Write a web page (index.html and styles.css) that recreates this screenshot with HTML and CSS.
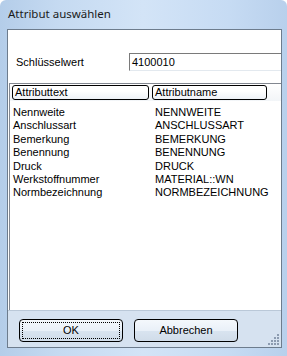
FILE: index.html
```html
<!DOCTYPE html>
<html lang="de">
<head>
    <meta charset="UTF-8">
    <title>Attribut auswählen</title>
    <link rel="stylesheet" href="styles.css">
</head>
<body>
    <div class="window">
        <div class="titlebar">Attribut auswählen</div>
        <div class="client">
            <div class="keypanel">
                <label class="keylabel">Schlüsselwert</label>
                <div class="keyinput">4100010</div>
            </div>
            <div class="list">
                <div class="listhead">
                    <div class="col col1">Attributtext</div>
                    <div class="col col2">Attributname</div>
                </div>
                <div class="rows">
                    <div class="row"><span class="c1">Nennweite</span><span>NENNWEITE</span></div>
                    <div class="row"><span class="c1">Anschlussart</span><span>ANSCHLUSSART</span></div>
                    <div class="row"><span class="c1">Bemerkung</span><span>BEMERKUNG</span></div>
                    <div class="row"><span class="c1">Benennung</span><span>BENENNUNG</span></div>
                    <div class="row"><span class="c1">Druck</span><span>DRUCK</span></div>
                    <div class="row"><span class="c1">Werkstoffnummer</span><span>MATERIAL::WN</span></div>
                    <div class="row"><span class="c1">Normbezeichnung</span><span>NORMBEZEICHNUNG</span></div>
                </div>
            </div>
            <div class="buttons">
                <button class="btn btn-default"><span>OK</span></button>
                <button class="btn"><span>Abbrechen</span></button>
                <div class="grip">
                    <svg width="12" height="12" viewBox="0 0 12 12">
                        <g fill="#8c9bb0">
                            <rect x="9" y="0" width="2" height="2"/>
                            <rect x="6" y="3" width="2" height="2"/><rect x="9" y="3" width="2" height="2"/>
                            <rect x="3" y="6" width="2" height="2"/><rect x="6" y="6" width="2" height="2"/><rect x="9" y="6" width="2" height="2"/>
                            <rect x="0" y="9" width="2" height="2"/><rect x="3" y="9" width="2" height="2"/><rect x="6" y="9" width="2" height="2"/><rect x="9" y="9" width="2" height="2"/>
                        </g>
                    </svg>
                </div>
            </div>
        </div>
    </div>
</body>
</html>
```

FILE: styles.css
```css
*{
    margin: 0;
    padding: 0;
    box-sizing: border-box;
}

body{
    width: 287px;
    height: 356px;
    overflow: hidden;
    font-family: "Liberation Sans", Arial, sans-serif;
    font-size: 11px;
    color: #000;
}

/* fenster mit aero-rahmen */
.window{
    width: 287px;
    height: 356px;
    padding: 0 5px 8px 7px;
    display: flex;
    flex-direction: column;
    background: linear-gradient(90deg, #b4cde9 0%, #c5daf1 20%, #d3e4f7 50%, #c6dbf3 80%, #b8d0ec 100%);
    border-radius: 6px 6px 0 0;
}

.titlebar{
    height: 29px;
    padding: 6px 0 0 1px;
    font-family: "Noto Sans", sans-serif;
    font-size: 11.5px;
    color: #1a1a1a;
}

.client{
    flex: 1;
    display: flex;
    flex-direction: column;
    border: 1px solid #6d7c8d;
    background: #fff;
}

.keypanel{
    height: 53px;
    display: flex;
    align-items: flex-start;
    padding: 23px 0 0 8px;
    background: #fff;
}

.keylabel{
    width: 113px;
    padding-top: 3px;
}

.keyinput{
    flex: 1;
    height: 18px;
    border: 1px solid #7a7a7a;
    border-right: none;
    border-bottom-color: #e3e9ef;
    padding: 2px 0 0 2px;
}

/* liste */
.list{
    flex: 1;
    margin-left: 1px;
    border-top: 1px solid #828790;
    border-left: 1px solid #828790;
    background: #fff;
}

.listhead{
    display: flex;
    height: 17px;
    padding: 1px 0 0 2px;
    background: linear-gradient(#ffffff, #f2f5f8);
}

.col{
    height: 15px;
    border: 1px solid #000;
    border-radius: 3px;
    padding: 0 0 0 2px;
    line-height: 13px;
    background: linear-gradient(#ffffff 40%, #eef2f7);
}

.col1{
    width: 137px;
    margin-right: 3px;
}

.col2{
    width: 115px;
}

.rows{
    padding: 5px 0 0 3px;
}

.row{
    display: flex;
    height: 13.4px;
    line-height: 13px;
}

.c1{
    width: 142px;
}

/* untere leiste */
.buttons{
    height: 37px;
    display: flex;
    align-items: flex-start;
    padding: 8px 0 0 11px;
    background: #d6e2f0;
    border-top: 1px solid #bac8d8;
    position: relative;
}

.btn{
    width: 104px;
    height: 23px;
    margin-right: 11px;
    border: 1px solid #000;
    border-radius: 4px;
    background: linear-gradient(#f4f8fc 0%, #e9f0f8 50%, #d9e4f0 51%, #d0dce9 100%);
    font-family: "Liberation Sans", Arial, sans-serif;
    font-size: 11px;
    color: #000;
    padding: 2px;
}

.btn span{
    display: block;
    height: 100%;
    line-height: 15px;
    border: 1px dotted transparent;
}

.btn-default span{
    border-color: #000;
}

.grip{
    position: absolute;
    right: 1px;
    bottom: 1px;
    height: 12px;
    line-height: 0;
}
```
